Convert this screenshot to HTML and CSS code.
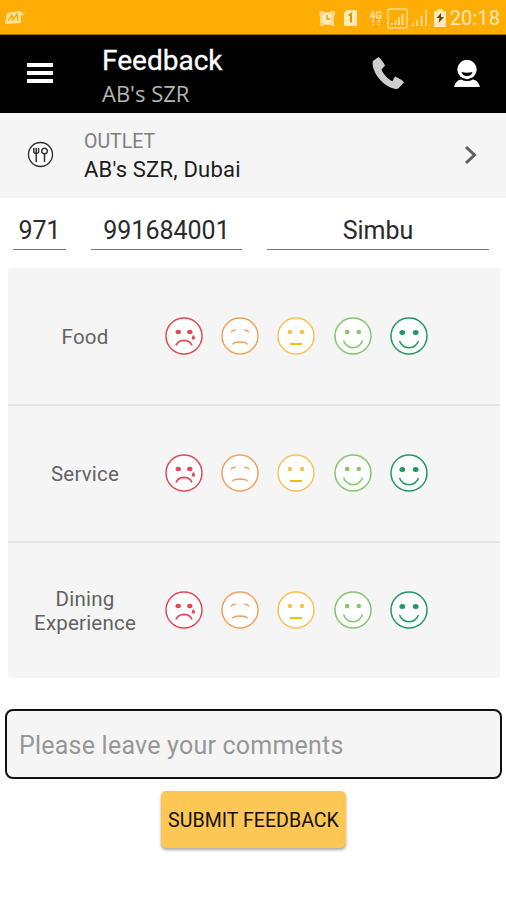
FILE: index.html
```html
<!DOCTYPE html>
<html lang="en">
<head>
    <meta charset="UTF-8">
    <meta name="viewport" content="width=device-width, initial-scale=1.0">
    <title>Feedback</title>
    <link rel="stylesheet" href="styles.css">
</head>
<body>
    <!-- faces used by every rating row -->
    <svg class="defs" width="0" height="0">
        <symbol id="face1" viewBox="0 0 38 38">
            <circle cx="19" cy="19" r="18"/>
            <path d="M11 28.500Q13 23.600 19 23.400Q25 23.600 27 28.500" stroke-width="1.800"/>
            <ellipse class="dot" cx="13.200" cy="15" rx="2.700" ry="2.200"/>
            <ellipse class="dot" cx="24.800" cy="15" rx="2.700" ry="2.200"/>
            <path class="dot" d="M28.300 17.800q3.600 4.600 0 5q-3.200-.4 0-5z"/>
        </symbol>
        <symbol id="face2" viewBox="0 0 38 38">
            <circle cx="19" cy="19" r="18"/>
            <path d="M11.500 27.500Q12.500 25.200 19 25Q25.500 25.200 26.500 27.500"/>
            <path d="M10 15.500q1.500-2.800 4.800-2M28 15.500q-1.500-2.800-4.800-2"/>
        </symbol>
        <symbol id="face3" viewBox="0 0 38 38">
            <circle cx="19" cy="19" r="18"/>
            <path class="mouth" d="M13 27h12"/>
            <circle class="dot" cx="13" cy="15" r="2.300"/>
            <circle class="dot" cx="25" cy="15" r="2.300"/>
        </symbol>
        <symbol id="face4" viewBox="0 0 38 38">
            <circle cx="19" cy="19" r="18"/>
            <path d="M9.500 23.500Q12 30.500 19 30.800Q26 30.500 28.500 23.500"/>
            <circle class="dot" cx="13.200" cy="15" r="2.300"/>
            <circle class="dot" cx="24.800" cy="15" r="2.300"/>
        </symbol>
        <symbol id="face5" viewBox="0 0 38 38">
            <circle cx="19" cy="19" r="18"/>
            <path d="M9.500 24Q12 30.500 19 30.800Q26 30.500 28.500 24"/>
            <ellipse class="dot" cx="12.300" cy="15.500" rx="2.900" ry="2.500"/>
            <ellipse class="dot" cx="25.700" cy="15.500" rx="2.900" ry="2.500"/>
        </symbol>
    </svg>

    <div class="status">
        <svg class="logo" width="22" height="16" viewBox="0 0 22 16">
            <path d="M3 3L16 1l2 2 3 1-4 1.500V13L1 14z" fill="#ffe2a0"/>
            <path d="M4 11l4-6 1 5 4-6 1 7" fill="none" stroke="#ffad05" stroke-width="1.500"/>
        </svg>
        <div class="status-icons">
            <svg width="18" height="18" viewBox="0 0 18 18">
                <path d="M1 2h4v1h8V2h4v4l-1 1v8l1 2h-4l-1-1H6l-1 1H1l1-2V7L1 6z" fill="#ffd780"/>
                <circle cx="9" cy="9.500" r="5.500" fill="#ffebc0"/>
                <path d="M9 6V10h3.500" fill="none" stroke="#f0a010" stroke-width="1.500"/>
            </svg>
            <svg class="sim" width="15" height="18" viewBox="0 0 15 18">
                <path d="M4 1h10v16H1V4z" fill="#ffe9b5"/>
                <path d="M5.500 6.500L8 5v8.500" fill="none" stroke="#e09500" stroke-width="2"/>
            </svg>
            <div class="net"><b>4G</b><svg width="12" height="6" viewBox="0 0 12 6"><path d="M3 0v5M9 0v5" stroke="#ffd37a" stroke-width="2" stroke-dasharray="3 1"/></svg></div>
            <svg class="signal" width="21" height="21" viewBox="0 0 21 21">
                <rect x="1" y="1" width="19" height="19" rx="1" fill="none" stroke="#ffdc8c" stroke-width="1.500"/>
                <path d="M5 17v-2M8.500 17v-5M12 17V9M15.500 17V6" stroke="#ffdc8c" stroke-width="2"/>
            </svg>
            <svg class="signal2" width="17" height="18" viewBox="0 0 17 18">
                <path d="M1.500 17v-3M6 17V11M10.500 17V7M15 17V1" stroke="#ffd987" stroke-width="2"/>
            </svg>
            <svg class="battery" width="12" height="18" viewBox="0 0 12 18">
                <path d="M3.500 0h5v2H12v16H0V2h3.500z" fill="#ffe9b5"/>
                <path d="M7 4L2.500 9h3L4.500 14 10 8H7z" fill="#604812"/>
            </svg>
            <span class="time">20:18</span>
        </div>
    </div>

    <header class="topbar">
        <div class="menu">
            <span></span>
            <span></span>
            <span></span>
        </div>
        <div class="heading">
            <h1>Feedback</h1>
            <p>AB's SZR</p>
        </div>
        <svg class="phone" width="34" height="34" viewBox="0 0 34 34">
            <path d="M7.500 1L2 5C-.5 12 9 30 24.500 33q2 .2 3-.8l5.500-5.700q-1-2.500-9-6l-2.600 4.800C16 22.500 12 17.500 10.500 13.500L14 9.500Q11 3.500 7.500 1z" fill="#cecece"/>
        </svg>
        <svg class="user" width="28" height="28" viewBox="0 0 28 28">
            <path d="M1 27Q2.500 20.500 8 19.500Q14 22.500 20 19.500Q25.500 20.500 27 27z" fill="#fff"/>
            <circle cx="14" cy="9.500" r="9.700" fill="#fff"/>
            <path d="M8.500 12Q14 13.500 19.500 12Q18.500 16 14 16Q9.500 16 8.500 12z" fill="#000"/>
        </svg>
    </header>

    <div class="outlet">
        <svg class="fork" width="27" height="27" viewBox="0 0 27 27">
            <circle cx="13.500" cy="13.500" r="12" fill="#fff" stroke="#2b2b2b" stroke-width="1.300"/>
            <path d="M6.800 7v3.500q0 2 2.400 2t2.400-2V7M9.200 7v14" fill="none" stroke="#333" stroke-width="1.500"/>
            <circle cx="17.500" cy="10" r="2.800" fill="none" stroke="#333" stroke-width="1.400"/>
            <path d="M17.500 13v8" stroke="#333" stroke-width="1.600"/>
        </svg>
        <div class="outlet-text">
            <h4>OUTLET</h4>
            <p>AB's SZR, Dubai</p>
        </div>
        <svg class="arrow" width="14" height="20" viewBox="0 0 14 20">
            <path d="M2 2l8.500 8L2 18" fill="none" stroke="#5f5f5f" stroke-width="3"/>
        </svg>
    </div>

    <form>
        <div class="fields">
            <input class="code" type="text" value="971">
            <input class="number" type="text" value="991684001">
            <input class="name" type="text" value="Simbu">
        </div>

        <div class="ratings">
            <div class="row">
                <label>Food</label>
                <div class="faces">
                    <svg class="f1"><use href="#face1"/></svg>
                    <svg class="f2"><use href="#face2"/></svg>
                    <svg class="f3"><use href="#face3"/></svg>
                    <svg class="f4"><use href="#face4"/></svg>
                    <svg class="f5"><use href="#face5"/></svg>
                </div>
            </div>
            <div class="row">
                <label>Service</label>
                <div class="faces">
                    <svg class="f1"><use href="#face1"/></svg>
                    <svg class="f2"><use href="#face2"/></svg>
                    <svg class="f3"><use href="#face3"/></svg>
                    <svg class="f4"><use href="#face4"/></svg>
                    <svg class="f5"><use href="#face5"/></svg>
                </div>
            </div>
            <div class="row">
                <label>Dining Experience</label>
                <div class="faces">
                    <svg class="f1"><use href="#face1"/></svg>
                    <svg class="f2"><use href="#face2"/></svg>
                    <svg class="f3"><use href="#face3"/></svg>
                    <svg class="f4"><use href="#face4"/></svg>
                    <svg class="f5"><use href="#face5"/></svg>
                </div>
            </div>
        </div>

        <input class="comments" type="text" placeholder="Please leave your comments">
        <button type="submit" class="btn">SUBMIT FEEDBACK</button>
    </form>
</body>
</html>
```
FILE: styles.css
```css
*{
    margin: 0;
    padding: 0;
    box-sizing: border-box;
    font-family: Roboto, "Liberation Sans", sans-serif;
}
body{
    width: 506px;
    height: 900px;
    background-color: white;
    overflow: hidden;
}
svg{
    flex: none;
}
.defs{
    display: block;
}

/* status bar */
.status{
    height: 35px;
    background-color: #ffad05;
    border-bottom: 1px solid #a87203;
    display: flex;
    justify-content: space-between;
    align-items: center;
    padding: 2px 6px 0 4px;
}
.status-icons{
    display: flex;
    align-items: center;
}
.sim{
    margin-left: 7px;
}
.net{
    width: 14px;
    margin-left: 11px;
    display: flex;
    flex-direction: column;
    align-items: center;
}
.net b{
    font-size: 10px;
    line-height: 9px;
    color: #ffe2a0;
}
.signal{
    margin-left: 4px;
}
.signal2{
    margin-left: 3px;
}
.battery{
    margin-left: 6px;
}
.time{
    margin-left: 4px;
    font-size: 20px;
    line-height: 20px;
    letter-spacing: 0.1px;
    color: #ffe9b8;
}

/* header */
.topbar{
    height: 78px;
    background-color: black;
    display: flex;
    padding: 0 25px 0 27px;
}
.menu{
    width: 26px;
    padding-top: 28px;
}
.menu span{
    display: block;
    height: 4px;
    margin-bottom: 4px;
    background-color: white;
}
.heading{
    flex: 1;
    margin-left: 49px;
    padding-top: 9px;
}
.heading h1{
    font-size: 28px;
    line-height: 33px;
    font-weight: 400;
    color: white;
    -webkit-text-stroke: 0.3px white;
}
.heading p{
    font-family: "Open Sans", sans-serif;
    font-size: 22px;
    line-height: 33px;
    color: #b4b4b4;
}
.phone{
    margin-top: 21px;
}
.user{
    margin: 25px 0 0 48px;
}

/* outlet */
.outlet{
    height: 85px;
    background-color: #f5f5f5;
    display: flex;
    padding-left: 27px;
}
.fork{
    margin-top: 28px;
}
.outlet-text{
    flex: 1;
    margin-left: 30px;
    padding-top: 16px;
}
.outlet-text h4{
    font-size: 19.5px;
    line-height: 26px;
    font-weight: 400;
    color: #808080;
}
.outlet-text p{
    font-size: 22px;
    line-height: 29px;
    letter-spacing: 0.2px;
    color: #1c1c1c;
}
.arrow{
    margin: 32px 28px 0 0;
}

/* customer fields */
.fields{
    height: 70px;
    padding: 12px 17px 0 13px;
    display: flex;
    gap: 25px;
}
.fields input{
    height: 40px;
    padding-top: 2px;
    border: none;
    border-bottom: 1px solid #777;
    background: none;
    font-size: 25px;
    text-align: center;
    color: #2a2a2a;
}
.code{
    width: 53px;
}
.number{
    width: 151px;
}
.name{
    flex: 1;
    min-width: 0;
}

/* ratings */
.ratings{
    margin: 0 6px 0 8px;
    padding-top: 1px;
    background-color: #f5f5f5;
    border-radius: 3px;
}
.row{
    height: 137px;
    display: flex;
    align-items: center;
    border-bottom: 2px solid #e4e4e4;
}
.row:last-child{
    height: 135px;
    border-bottom: none;
}
.row label{
    width: 114px;
    margin-left: 20px;
    padding-top: 1px;
    font-size: 20.5px;
    line-height: 24px;
    letter-spacing: 0.2px;
    text-align: center;
    color: #636363;
}
.faces{
    display: flex;
    gap: 18.2px;
    margin-left: 23px;
    padding-bottom: 2px;
}
.faces svg{
    width: 38px;
    height: 38px;
    fill: none;
    stroke: currentColor;
    stroke-width: 1.5;
}
symbol > circle:first-child{
    fill: white;
}
.dot{
    fill: currentColor;
    stroke: none;
}
.mouth{
    stroke: #e8c414;
    stroke-width: 2;
}
.f1{
    color: #e04a55;
}
.f2{
    color: #f3a25c;
}
.f3{
    color: #f6c455;
}
.f4{
    color: #83c66c;
}
.f5{
    color: #209a62;
}

/* comments */
.comments{
    display: block;
    width: 497px;
    height: 70px;
    margin: 31px 0 0 5px;
    padding: 2px 0 0 12px;
    border: 2px solid #111;
    border-radius: 8px;
    background-color: #f5f5f5;
    font-size: 25px;
    letter-spacing: 0.22px;
}
.comments::placeholder{
    color: #979797;
}
.btn{
    display: block;
    width: 185px;
    height: 57px;
    margin: 12px 0 0 161px;
    padding-top: 1px;
    border: none;
    border-radius: 5px;
    background-color: #fcc755;
    box-shadow: 0 2px 3px rgba(0,0,0,0.35);
    font-size: 19.6px;
    white-space: nowrap;
    color: #151005;
}
```
